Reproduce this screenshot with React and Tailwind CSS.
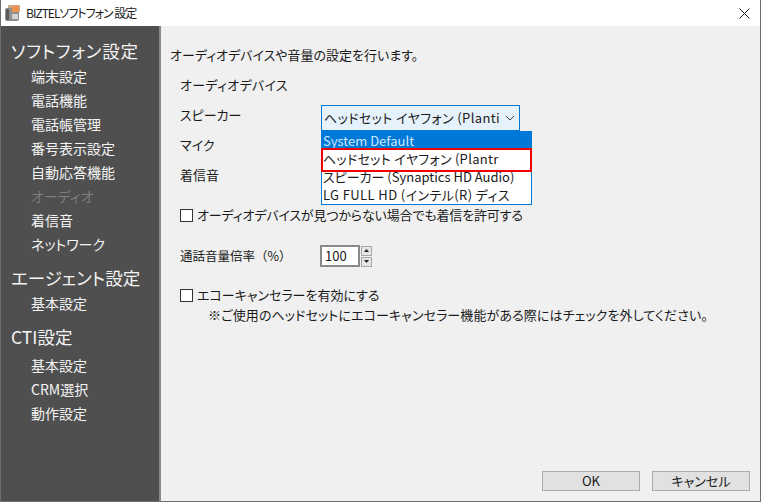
import React from "react";

const FONT = "font-['Noto_Sans_CJK_JP','Noto_Sans',sans-serif] [font-feature-settings:'palt']";

const AppIcon = () => (
  <svg width="16" height="17" viewBox="0 0 16 17">
    <rect x="3" y="0" width="12" height="7" rx="1" fill="#c9a888" />
    <rect x="0" y="3" width="14" height="13" rx="2" fill="#8f8f8f" />
    <rect x="1" y="4" width="3" height="11" rx="1" fill="#5a5a5a" />
    <rect x="7" y="1" width="7" height="6" fill="#ef8f50" />
    <rect x="7" y="9" width="6" height="5" fill="#d4d4d4" />
  </svg>
);

const Check = ({ children, tight }) => (
  <div className="flex items-center h-[20px]">
    <span className="w-[13px] h-[13px] border border-[#333333] bg-white shrink-0" />
    <span className={`ml-[4px] text-[13px] text-[#1a1a1a] ${tight ? "tracking-[-0.15px]" : ""}`}>{children}</span>
  </div>
);

const sections = [
  { title: "ソフトフォン設定", gap: "mb-[9px]", titleClass: "tracking-[0.8px]", items: ["端末設定", "電話機能", "電話帳管理", "番号表示設定", "自動応答機能", "オーディオ", "着信音", "ネットワーク"] },
  { title: "エージェント設定", gap: "mb-[9px]", titleClass: "", items: ["基本設定"] },
  { title: "CTI設定", gap: "", titleClass: "mb-[3px]", items: ["基本設定", "CRM選択", "動作設定"] },
];

const Sidebar = () => (
  <aside className="w-[160px] shrink-0 bg-[#4f4f4f] pt-[12px] border-r-2 border-[#8a8a8a]">
    {sections.map((s) => (
      <div key={s.title} className={s.gap}>
        <div className={`pl-[10px] h-[26px] leading-[26px] text-[17.5px] text-[#f4f4f4] ${s.titleClass}`}>{s.title}</div>
        {s.items.map((item) => (
          <div
            key={item}
            className={`pl-[30px] h-[24px] leading-[24px] text-[14px] ${item === "オーディオ" ? "text-[#7d7d7d]" : "text-[#f4f4f4]"}`}
          >
            {item}
          </div>
        ))}
      </div>
    ))}
  </aside>
);

const Dropdown = () => (
  <div className="absolute left-[160px] top-[79px] w-[211px]">
    <div className="w-[199px] h-[26px] border border-[#0078d7] bg-[#e5f1fb] flex items-center pl-[2px] text-[13px] text-[#1a1a1a]">
      <span className="w-[178px] overflow-hidden whitespace-nowrap tracking-[0.4px]">ヘッドセット イヤフォン (Planti</span>
      <svg width="10" height="6" viewBox="0 0 10 6" className="ml-[3px]" fill="none" stroke="#444444">
        <path d="M1 1 L5 5 L9 1" />
      </svg>
    </div>
    <div className="relative border border-[#0078d7] bg-white h-[74px] text-[13px] leading-[18px] text-[#1a1a1a] whitespace-nowrap">
      <div className="h-[17px] leading-[17px] bg-[#0078d7] text-[#cfe8ff] pl-[1px]">System Default</div>
      <div className="h-[19px] leading-[19px] pl-[1px] tracking-[0.3px]">ヘッドセット イヤフォン (Plantr</div>
      <div className="h-[18px] pl-[1px]">スピーカー (Synaptics HD Audio)</div>
      <div className="h-[18px] pl-[1px] tracking-[0.4px]">LG FULL HD (インテル(R) ディス</div>
      {/* red annotation round the chosen row */}
      <div className="absolute left-[-1px] right-[-1px] top-[16px] h-[24px] border-[2px] border-[#f00000]" />
    </div>
  </div>
);

const Spinner = () => (
  <div className="flex items-center gap-[1px]">
    <div className="w-[40px] h-[22px] border-2 border-[#8a8a8a] bg-white flex items-center pl-[3px] text-[13px] text-[#1a1a1a]">100</div>
    <div className="flex flex-col gap-[1px]">
      <div className="w-[11px] h-[10px] border border-[#a8a8a8] bg-[#e6e6e6] flex items-center justify-center">
        <svg width="5" height="3" viewBox="0 0 5 3"><path d="M2.5 0 L5 3 L0 3 Z" fill="#222222" /></svg>
      </div>
      <div className="w-[11px] h-[10px] border border-[#a8a8a8] bg-[#e6e6e6] flex items-center justify-center">
        <svg width="5" height="3" viewBox="0 0 5 3"><path d="M0 0 L5 0 L2.5 3 Z" fill="#222222" /></svg>
      </div>
    </div>
  </div>
);

const Form = () => (
  <main className="relative flex-1 bg-[#f0f0f0] flex flex-col text-[13px] text-[#1a1a1a]">
    <div className="pl-[9px] pt-[19px] h-[47px] leading-[20px]">オーディオデバイスや音量の設定を行います。</div>
    <div className="pl-[19px] flex flex-col">
      <div className="h-[30px] leading-[20px] pt-[2px] tracking-[0.3px]">オーディオデバイス</div>
      <div className="h-[30px] leading-[20px] pt-[2px]">スピーカー</div>
      <div className="h-[30px] leading-[20px] pt-[2px]">マイク</div>
      <div className="h-[30px] leading-[20px] pt-[2px]">着信音</div>
      <div className="mt-[12px]">
        <Check tight>オーディオデバイスが見つからない場合でも着信を許可する</Check>
      </div>
      <div className="flex items-center h-[22px] mt-[20px]">
        <span className="w-[140px] [font-feature-settings:normal] text-[12.5px]">通話音量倍率（%）</span>
        <Spinner />
      </div>
      <div className="mt-[18px]">
        <Check>エコーキャンセラーを有効にする</Check>
      </div>
      <div className="pl-[28px] h-[20px] leading-[20px] tracking-[0.1px]">※ご使用のヘッドセットにエコーキャンセラー機能がある際にはチェックを外してください。</div>
    </div>
    <Dropdown />
    <div className="mt-auto mb-[10px] pr-[10px] flex justify-end gap-[12px]">
      <button className="w-[98px] h-[20px] border border-[#adadad] bg-[#e1e1e1] text-[13px] leading-[18px]">OK</button>
      <button className="w-[98px] h-[20px] border border-[#adadad] bg-[#e1e1e1] text-[13px] leading-[18px]">キャンセル</button>
    </div>
  </main>
);

export default function App() {
  return (
    <div className={`${FONT} w-[761px] h-[502px] flex flex-col bg-white border-x border-b border-[#6e6e6e] overflow-hidden`}>
      {/* title bar */}
      <header className="h-[26px] shrink-0 flex items-center pl-[4px] pr-[10px] bg-white">
        <AppIcon />
        <span className="ml-[5px] text-[12px] tracking-[-1px] text-[#1a1a1a]">BIZTELソフトフォン 設定</span>
        <svg width="11" height="11" viewBox="0 0 11 11" className="ml-auto" fill="none" stroke="#222222">
          <path d="M0.5 0.5 L10.5 10.5 M10.5 0.5 L0.5 10.5" />
        </svg>
      </header>
      <div className="flex flex-1 min-h-0">
        <Sidebar />
        <Form />
      </div>
    </div>
  );
}
